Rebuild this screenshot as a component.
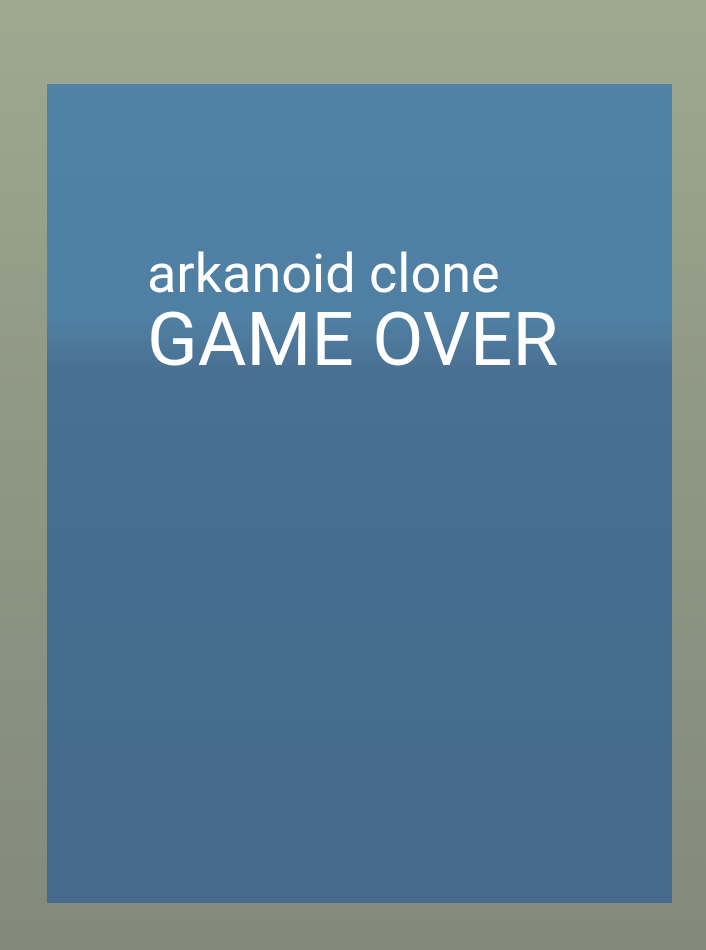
export default function App() {
  return (
    <div className="h-[950px] w-[706px] overflow-hidden bg-[linear-gradient(to_bottom,#9fa990_0%,#8f9785_45%,#838a7a_100%)] pt-[84px] pl-[47px]">
      <div className="h-[819px] w-[625px] bg-[linear-gradient(to_bottom,#5181a5_0%,#4f7fa2_29%,#496f92_35.5%,#466d8f_60%,#456a8b_100%)] pt-[162px] pl-[100px] text-white font-['Roboto',sans-serif]">
        <h2 className="text-[54px] leading-[56px] font-normal">arkanoid clone</h2>
        <h1 className="mt-[3px] text-[74.5px] leading-[70px] font-normal">GAME OVER</h1>
      </div>
    </div>
  );
}
